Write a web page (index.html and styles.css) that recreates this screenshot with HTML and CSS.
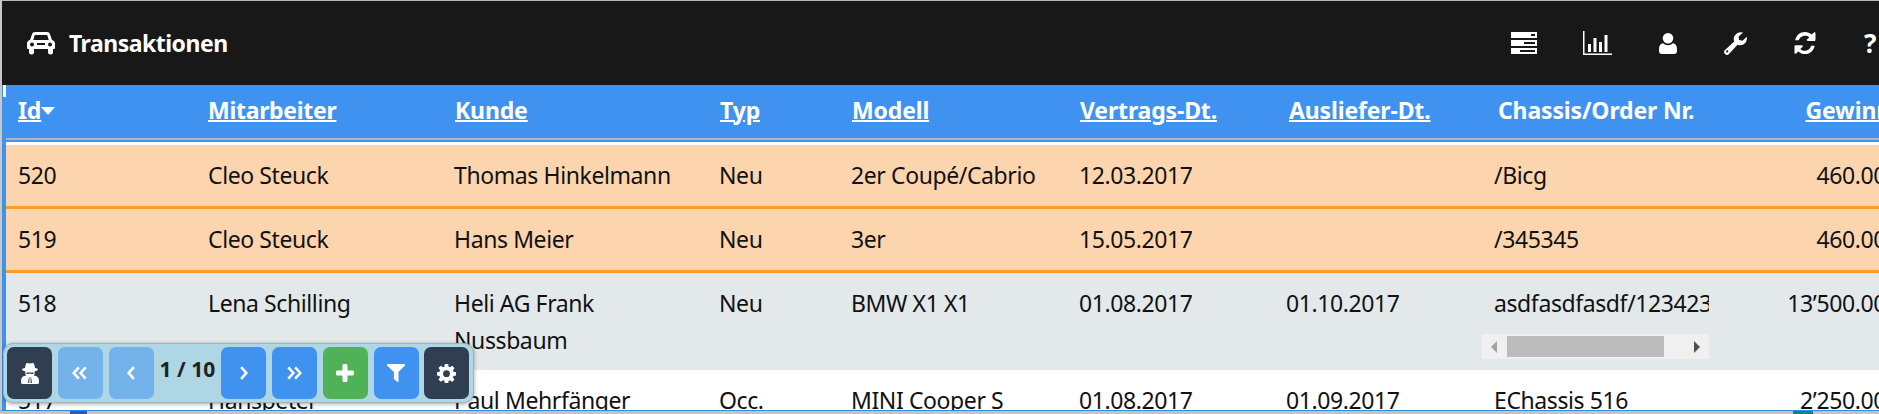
FILE: index.html
```html
<!DOCTYPE html>
<html lang="de">
<head>
    <meta charset="UTF-8">
    <meta name="viewport" content="width=device-width, initial-scale=1.0">
    <title>Transaktionen</title>
    <link rel="stylesheet" href="styles.css">
</head>
<body>
    <div class="window">
        <header class="topbar">
            <div class="brand">
                <svg class="car-icon" viewBox="0 0 28 24"><path fill="#fff" fill-rule="evenodd" d="M8 1h12c1.500 0 2.500.8 3 2.200L25 9c1.800.4 3 1.800 3 3.600V17c0 .6-.4 1-1 1h-1v3a2.500 2.500 0 0 1-5 0v-3H7v3a2.500 2.500 0 0 1-5 0v-3H1c-.6 0-1-.4-1-1v-4.400C0 10.800 1.200 9.400 3 9l2-5.800C5.500 1.800 6.500 1 8 1zm.5 3c-.5 0-.9.3-1 .7L6.300 9h15.400l-1.200-4.300c-.1-.4-.5-.7-1-.7h-11zM5 11.500a2 2 0 1 0 0 4 2 2 0 0 0 0-4zm18 0a2 2 0 1 0 0 4 2 2 0 0 0 0-4zM10 12v2h8v-2h-8z"/></svg>
                <span>Transaktionen</span>
            </div>
            <nav class="tools">
                <svg class="tool-icon server-icon" viewBox="0 0 26 22"><path fill="#fff" fill-rule="evenodd" d="M0 0h26v6H0V0zm0 8h26v6H0V8zm0 8h26v6H0v-6zM20 2v2h4V2h-4zm-7 8v2h11v-2H13zm-4 8v2h15v-2H9z"/></svg>
                <svg class="tool-icon chart-icon" viewBox="0 0 29 24"><path fill="#fff" d="M0 0h1.500v22.500H29V24H0V0zM5 13h3v8H5v-8zm5.500-6h3v14h-3V7zM16 11h3v10h-3V11zm5.500-7h3v17h-3V4z"/></svg>
                <svg class="tool-icon user-icon" viewBox="0 0 18 21"><path fill="#fff" d="M9 0a5.300 5.300 0 1 1 0 10.600A5.300 5.300 0 0 1 9 0zM4 10.300c1.300 1.200 3 1.900 5 1.900s3.700-.7 5-1.900c2.500.3 4 2.400 4 6v1.700c0 1.700-1.200 3-2.800 3H2.800C1.200 21 0 19.700 0 18v-1.700c0-3.600 1.500-5.700 4-6z"/></svg>
                <svg class="tool-icon wrench-icon" viewBox="0 0 23 23"><path fill="#fff" fill-rule="evenodd" d="M22.700 5.200c.2.500.3 1 .3 1.500a7 7 0 0 1-9.500 6.100L5 21.900a2.800 2.800 0 0 1-4-4l9.200-8.400A7 7 0 0 1 18.500.4c.3.100.3.400.1.600l-4 3.500.4 3.600 3.500.6 4-3.700c.2-.1.600 0 .7.200zM3.200 18.300a1.100 1.100 0 1 0 0 2.200 1.100 1.100 0 0 0 0-2.200z"/></svg>
                <svg class="tool-icon sync-icon" viewBox="0 0 22 22"><path fill="#fff" d="M11 0c2.500 0 4.900 1 6.700 2.600L19.900.5c.6-.6 1.600-.2 1.600.6v7c0 .5-.4.900-.9.900h-7c-.8 0-1.200-1-.6-1.600l2.300-2.200A6.600 6.600 0 0 0 4.800 8.300H1.200C2 3.500 6.100 0 11 0zM.9 13.300h7c.8 0 1.200 1 .6 1.600l-2.300 2.200a6.600 6.600 0 0 0 10.900-3.400h3.600C19.900 18.500 15.800 22 11 22c-2.500 0-4.900-1-6.700-2.600L2.100 21.500c-.6.600-1.600.2-1.600-.6v-6.700c0-.5.400-.9.900-.9z"/></svg>
                <span class="help">?</span>
            </nav>
        </header>

        <div class="table-wrap">
            <span class="corner-tick"></span>
            <table class="transactions">
                <colgroup>
                    <col class="c-id"><col class="c-emp"><col class="c-cust"><col class="c-type"><col class="c-model">
                    <col class="c-date1"><col class="c-date2"><col class="c-chassis"><col class="c-profit">
                </colgroup>
                <thead>
                    <tr>
                        <th class="th-id"><a href="#">Id</a><span class="sort-caret"></span></th>
                        <th class="th-emp"><a href="#">Mitarbeiter</a></th>
                        <th><a href="#">Kunde</a></th>
                        <th><a href="#">Typ</a></th>
                        <th><a href="#">Modell</a></th>
                        <th><a href="#">Vertrags-Dt.</a></th>
                        <th class="th-deliv"><a href="#">Ausliefer-Dt.</a></th>
                        <th class="th-chassis">Chassis/Order Nr.</th>
                        <th class="num"><a href="#">Gewinn</a></th>
                    </tr>
                </thead>
                <tbody>
                    <tr class="gap"><td colspan="9"></td></tr>
                    <tr class="marked">
                        <td>520</td><td>Cleo Steuck</td><td>Thomas Hinkelmann</td><td>Neu</td><td>2er Coupé/Cabrio</td>
                        <td>12.03.2017</td><td></td><td>/Bicg</td><td class="num">460.00</td>
                    </tr>
                    <tr class="marked">
                        <td>519</td><td>Cleo Steuck</td><td>Hans Meier</td><td>Neu</td><td>3er</td>
                        <td>15.05.2017</td><td></td><td>/345345</td><td class="num">460.00</td>
                    </tr>
                    <tr class="grey">
                        <td>518</td><td>Lena Schilling</td><td>Heli AG Frank Nussbaum</td><td>Neu</td><td>BMW X1 X1</td>
                        <td>01.08.2017</td><td>01.10.2017</td>
                        <td class="scroll-cell">
                            <div class="scroll-text">asdfasdfasdf/123423423</div>
                            <div class="scrollbar">
                                <span class="arrow arrow-left"></span>
                                <span class="thumb"></span>
                                <span class="arrow arrow-right"></span>
                            </div>
                        </td>
                        <td class="num">13’500.00</td>
                    </tr>
                    <tr>
                        <td>517</td><td>Hanspeter</td><td>Paul Mehrfänger</td><td>Occ.</td><td>MINI Cooper S</td>
                        <td>01.08.2017</td><td>01.09.2017</td><td>EChassis 516</td><td class="num">2’250.00</td>
                    </tr>
                </tbody>
            </table>
        </div>

        <div class="pager">
            <button class="btn dark">
                <svg class="pi" viewBox="0 0 18 21"><path fill="#fff" fill-rule="evenodd" d="M6 0c1 0 2 .6 3 .6S11 0 12 0c1 0 1.500 2 2 5 1.500.3 3 .8 3 1.500S15.500 8 13.500 8.400c.3 1 .2 2 0 2.600.2.700-.3 1-1 1.500l2.500.5c2 .5 3 2.500 3 5v1.500c0 .8-.7 1.500-1.500 1.500h-15C.7 21 0 20.300 0 19.500V18c0-2.500 1-4.500 3-5l2.500-.5c-.7-.5-1.200-.8-1-1.500-.2-.6-.3-1.600 0-2.600C2.500 8 1 7.200 1 6.500S2.500 5.300 4 5c.5-3 1-5 2-5zM5.500 9.500V11h2.800l.7-1h0l.7 1h2.800V9.500h-7zM8 14l-1 6h1.300l.2-5.500L8 14zm2 0l-.5.500.2 5.500H11l-1-6z"/></svg>
            </button>
            <button class="btn blue off"><svg class="pa" viewBox="0 0 14 12"><path d="M6 1L1.500 6 6 11M12 1L7.500 6 12 11"/></svg></button>
            <button class="btn blue off"><svg class="pa single" viewBox="0 0 8 12"><path d="M6.500 1L2 6l4.500 5"/></svg></button>
            <span class="page-no">1 / 10</span>
            <button class="btn blue"><svg class="pa single" viewBox="0 0 8 12"><path d="M1.500 1L6 6l-4.500 5"/></svg></button>
            <button class="btn blue"><svg class="pa" viewBox="0 0 14 12"><path d="M2 1l4.500 5L2 11M8 1l4.500 5L8 11"/></svg></button>
            <button class="btn green"><svg class="pi plus" viewBox="0 0 18 18"><path fill="#fff" d="M6.500 1.500C6.500.7 7.200 0 8 0h2c.8 0 1.500.7 1.500 1.500v5h5c.8 0 1.500.7 1.500 1.500v2c0 .8-.7 1.500-1.500 1.500h-5v5c0 .8-.7 1.500-1.500 1.500H8c-.8 0-1.500-.7-1.500-1.500v-5h-5C.7 11.500 0 10.800 0 10V8c0-.8.700-1.500 1.500-1.500h5v-5z"/></svg></button>
            <button class="btn blue"><svg class="pi funnel" viewBox="0 0 18 18"><path fill="#fff" d="M0 1c0-.6.400-1 1-1h16c.6 0 1 .4 1 1 0 .3-.1.500-.3.700L11.500 8v9.300c0 .7-.8 1-1.300.5l-3-2.500c-.2-.2-.3-.4-.3-.7V8L.3 1.700C.1 1.500 0 1.300 0 1z"/></svg></button>
            <button class="btn dark"><svg class="pi gear" viewBox="0 0 18 18"><path fill="#fff" fill-rule="evenodd" d="M7.400 0h3.200l.4 2.500 1.300.6L14.500 1.700l2.100 2.300-1.500 2 .5 1.400 2.400.4v3.200l-2.400.4-.5 1.300 1.500 2.100-2.300 2.200-2-1.500-1.300.5-.4 2.500H7.400L7 15.900l-1.300-.5-2.100 1.500-2.200-2.200 1.500-2.100-.6-1.300L0 10.900V7.700l2.300-.4.600-1.300-1.500-2.100L3.600 1.700l2.100 1.400L7 2.500 7.400 0zM9 6a3.200 3.200 0 1 0 0 6.400A3.200 3.200 0 0 0 9 6z"/></svg></button>
        </div>
    </div>

    <div class="taskbar">
        <span class="task-word"><i></i>Word</span>
        <span class="task-teal"></span>
    </div>
</body>
</html>
```

FILE: styles.css
```css
body {
    margin: 0;
    font-family: 'Noto Sans', 'Open Sans', sans-serif;
    background-color: #c4c4c4;
    overflow: hidden;
}
.window {
    position: relative;
    height: 409px;
    border-top: 1px solid #b5b5b5;
    border-bottom: 1px solid #2f8fe0;
    border-left: 2px solid #c8c8c8;
    background-color: #3f92f0;
    overflow: hidden;
}
.topbar {
    height: 84px;
    background-color: #181818;
    display: flex;
    align-items: center;
    justify-content: space-between;
    color: white;
}
.brand {
    display: flex;
    align-items: center;
    margin-left: 25px;
    font-size: 23px;
    font-weight: 700;
    letter-spacing: -0.5px;
}
.car-icon {
    width: 28px;
    height: 24px;
    margin-right: 14px;
}
.tools {
    display: flex;
    align-items: center;
    width: 368px;
    flex: none;
}
.tool-icon {
    flex: none;
    display: block;
}
.server-icon { width: 26px; height: 22px; margin-right: 46px; }
.chart-icon { width: 29px; height: 24px; margin-right: 47px; }
.user-icon { width: 18px; height: 21px; margin-right: 47px; }
.wrench-icon { width: 23px; height: 23px; margin-right: 47px; }
.sync-icon { width: 22px; height: 22px; margin-right: 48px; }
.help {
    font-size: 26px;
    font-weight: 700;
}

.table-wrap {
    position: relative;
    height: 325px;
    overflow: hidden;
}
.corner-tick {
    position: absolute;
    left: 1px;
    top: 0;
    width: 3px;
    height: 12px;
    background-color: white;
}
.transactions {
    border-collapse: separate;
    border-spacing: 0;
    table-layout: fixed;
    width: 1898px;
    margin-left: 4px;
    font-size: 23px;
    letter-spacing: -0.4px;
    color: #111;
}
.c-id { width: 190px; }
.c-emp { width: 246px; }
.c-cust { width: 265px; }
.c-type { width: 132px; }
.c-model { width: 228px; }
.c-date1 { width: 207px; }
.c-date2 { width: 208px; }
.c-chassis { width: 239px; }
.c-profit { width: 183px; }

.transactions th {
    height: 55px;
    padding: 0 0 4px 13px;
    text-align: left;
    color: white;
    font-size: 23px;
    font-weight: 700;
    letter-spacing: -0.15px;
    white-space: nowrap;
    box-sizing: border-box;
    border-bottom: 2px solid #b4b4b4;
}
.transactions th a {
    color: white;
    text-decoration-thickness: 2px;
}
.transactions th.th-id { padding-left: 12px; }
.transactions th.th-emp { padding-left: 12px; letter-spacing: -0.3px; }
.transactions th.th-deliv { padding-left: 15px; }
.transactions th.th-chassis { padding-left: 16px; }
.sort-caret {
    display: inline-block;
    border-left: 7px solid transparent;
    border-right: 7px solid transparent;
    border-top: 8px solid white;
    vertical-align: 4px;
}
.transactions .gap td {
    height: 3px;
    padding: 0;
    border-top: 2px solid #3f92f0;
    background-color: white;
    line-height: 0;
}
.transactions td {
    padding: 12px 12px 11px;
    line-height: 37px;
    vertical-align: top;
    background-color: white;
}
.transactions td.num {
    text-align: right;
    padding-right: 18px;
}
.transactions th.num {
    text-align: right;
    padding: 0 13px 4px 0;
}
.transactions .marked td {
    padding-bottom: 12px;
    border-bottom: 3px solid #fd9b27;
    background-color: #fcd5ae;
}
.transactions .grey td {
    background-color: #e3e8eb;
}

.scroll-text {
    white-space: nowrap;
    overflow: hidden;
}
.scrollbar {
    display: flex;
    align-items: center;
    height: 25px;
    margin: 12px 0 0 -12px;
    background-color: #f0f0f0;
}
.thumb {
    width: 157px;
    height: 21px;
    margin-left: 10px;
    background-color: #bcbcbc;
}
.arrow {
    width: 0;
    height: 0;
    border-top: 6px solid transparent;
    border-bottom: 6px solid transparent;
}
.arrow-left {
    margin-left: 9px;
    border-right: 6px solid #a3a3a3;
}
.arrow-right {
    margin-left: auto;
    margin-right: 9px;
    border-left: 6px solid #505050;
}

.pager {
    position: absolute;
    left: 1px;
    top: 342px;
    display: flex;
    align-items: center;
    gap: 5.8px;
    padding: 3px 4px 3px 3px;
    height: 52px;
    background-color: #aed6e5;
    border: 1px solid #9fb4bc;
    border-radius: 10px;
    box-shadow: 0 1px 4px rgba(0,0,0,0.35);
}
.btn {
    width: 45px;
    height: 52px;
    padding: 0;
    border: none;
    border-radius: 7px;
    display: flex;
    align-items: center;
    justify-content: center;
}
.btn.dark { background-color: #2f3e50; }
.btn.blue { background-color: #3f92f0; }
.btn.blue.off { background-color: #74b2ec; }
.btn.green { background-color: #4fb257; }
.pi {
    width: 18px;
    height: 21px;
}
.pi.plus { height: 18px; }
.pi.funnel { height: 18px; }
.pi.gear { width: 19px; height: 19px; }
.pa {
    width: 16px;
    height: 14px;
    fill: none;
    stroke: white;
    stroke-width: 2.2px;
}
.pa.single {
    width: 10px;
}
.page-no {
    width: 56px;
    text-align: center;
    font-size: 21px;
    font-weight: 700;
    color: #222;
    white-space: nowrap;
    margin-bottom: 8px;
}

.taskbar {
    height: 3px;
    display: flex;
    justify-content: space-between;
    overflow: hidden;
    padding: 0 66px 0 70px;
    background-color: #c4c4c4;
}
.task-word {
    display: flex;
    gap: 13px;
    font-size: 16px;
    line-height: 22px;
    color: #333;
}
.task-word i {
    width: 17px;
    height: 3px;
    background-color: #2a5fa8;
}
.task-teal {
    width: 20px;
    height: 3px;
    background-color: #1d7f80;
}
```
